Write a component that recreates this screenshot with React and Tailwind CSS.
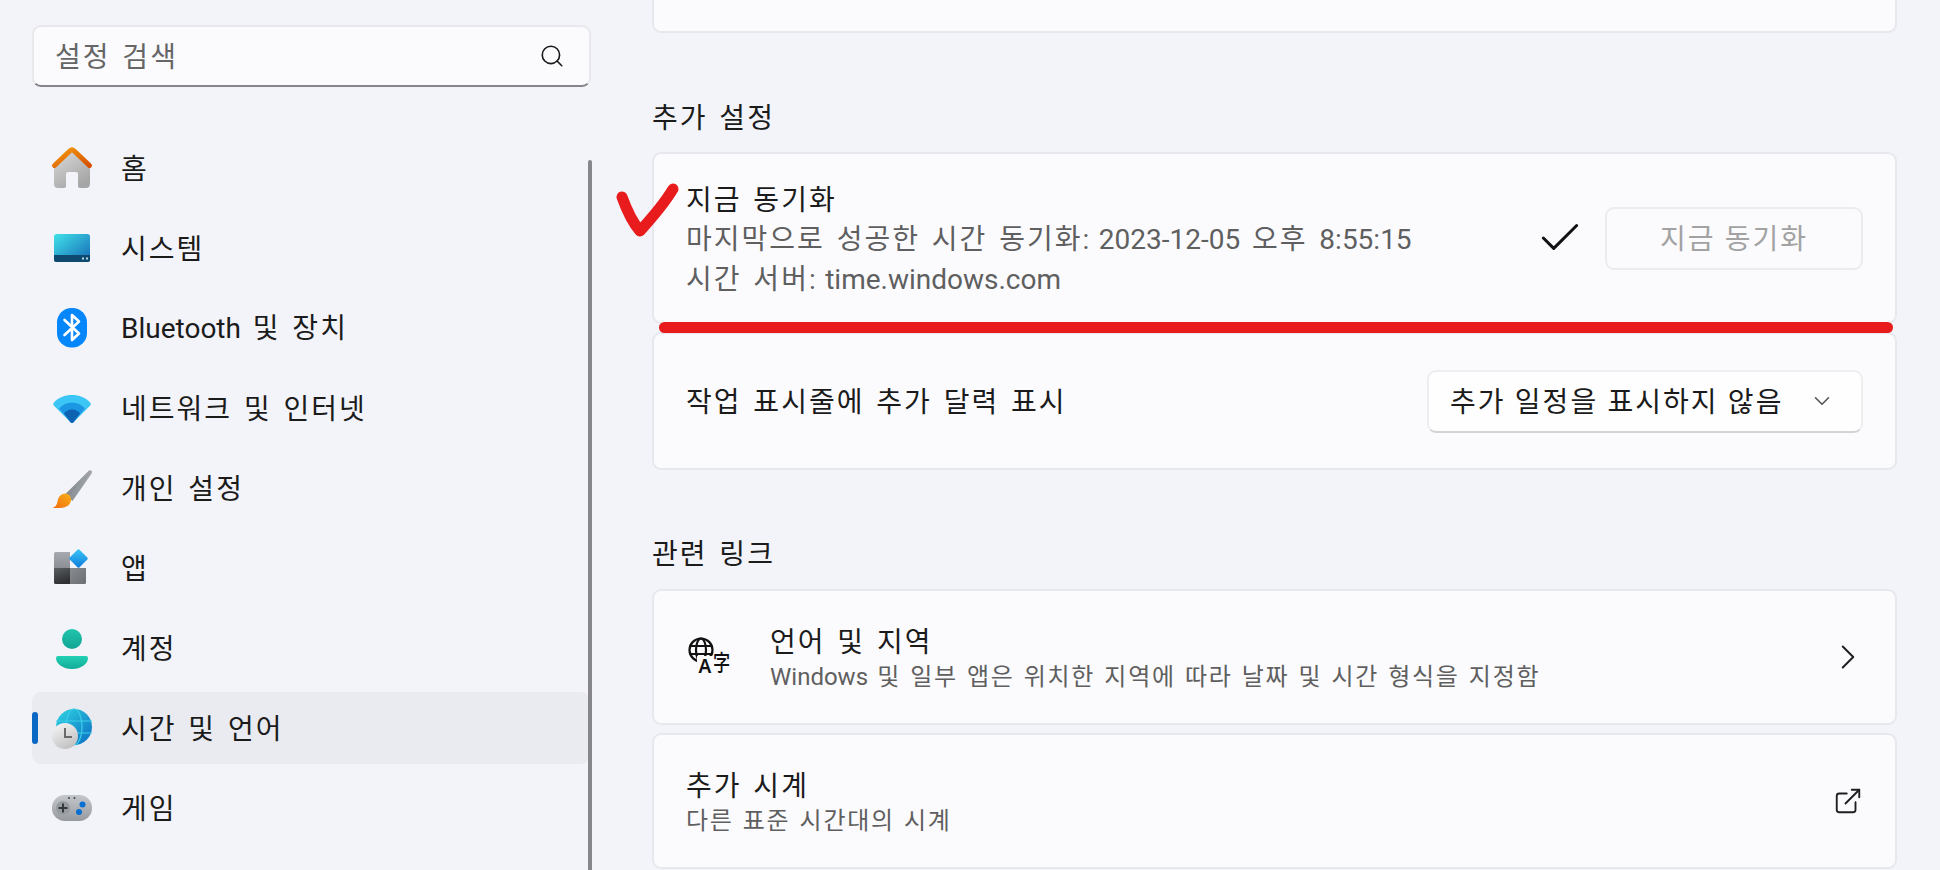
import React from 'react';
import { Search, ChevronDown, ChevronRight, Check, ExternalLink } from 'lucide-react';

const Txt = ({ children }) => (
    <>
        {children.split(/([가-힣 ]+)/).filter(Boolean).map((part, i) => (
            <span key={i} className={/[가-힣]/.test(part) ? 'tracking-[0.072em]' : "font-['Roboto']"}>{part}</span>
        ))}
    </>
);

const HomeIcon = () => (
    <svg width="48" height="48" viewBox="0 0 48 48">
        <defs>
            <linearGradient id="homeBody" x1="0" y1="0" x2="0.6" y2="1"><stop offset="0" stopColor="#dcdcdc" /><stop offset="1" stopColor="#a6a6a6" /></linearGradient>
            <linearGradient id="homeRoof" x1="0" y1="0" x2="1" y2="1"><stop offset="0" stopColor="#f59a0a" /><stop offset="1" stopColor="#d64f00" /></linearGradient>
        </defs>
        <path d="M24 6 L42 22 V40 a4 4 0 0 1-4 4 H32 a2 2 0 0 1-2-2 V30 a2 2 0 0 0-2-2 H20 a2 2 0 0 0-2 2 V42 a2 2 0 0 1-2 2 H10 a4 4 0 0 1-4-4 V22 Z" fill="url(#homeBody)" />
        <path d="M6.5 21.5 L22 6.8 a3 3 0 0 1 4 0 L41.5 21.5" fill="none" stroke="url(#homeRoof)" strokeWidth="5" strokeLinecap="round" strokeLinejoin="round" />
    </svg>
);

const SystemIcon = () => (
    <svg width="48" height="48" viewBox="0 0 48 48">
        <defs>
            <linearGradient id="sysScreen" x1="0" y1="0" x2="1" y2="1"><stop offset="0" stopColor="#40e2ea" /><stop offset="1" stopColor="#1568b4" /></linearGradient>
        </defs>
        <rect x="6" y="10" width="36" height="28" rx="2.5" fill="url(#sysScreen)" />
        <path d="M6 31 H42 V35.5 a2.5 2.5 0 0 1-2.5 2.5 H8.5 a2.5 2.5 0 0 1-2.5-2.5 Z" fill="#0e4a70" />
        <rect x="34" y="33.5" width="2" height="2" fill="#b9d6e4" />
        <rect x="38" y="33.5" width="2" height="2" fill="#b9d6e4" />
    </svg>
);

const BluetoothIcon = () => (
    <svg width="48" height="48" viewBox="0 0 48 48">
        <rect x="9" y="4" width="30" height="39.5" rx="14.5" fill="#0686fb" />
        <path d="M16.5 16 L31 29.5 L24 36 V11 L31 17.5 L16.5 31" fill="none" stroke="#fff" strokeWidth="2.6" strokeLinejoin="round" strokeLinecap="round" />
    </svg>
);

const WifiIcon = () => (
    <svg width="48" height="48" viewBox="0 0 48 48">
        <path d="M6 18.5 C10 13.5 17 11 24 11 C31 11 38 13.5 42 18.5 c1 1.2 1 2.2 0 3.2 L25.5 38.3 c-.9.9-2.1.9-3 0 L6 21.7 c-1-1-1-2 0-3.2 Z" fill="#3cc6f6" />
        <path d="M11 24.5 C14.5 20.5 19 18.5 24 18.5 C29 18.5 33.5 20.5 37 24.5 L25.5 38.3 c-.9.9-2.1.9-3 0 Z" fill="#1a96e2" />
        <path d="M16 29.5 C18 27 21 25.5 24 25.5 C27 25.5 30 27 32 29.5 L25.5 38.3 c-.9.9-2.1.9-3 0 Z" fill="#0f62b2" />
    </svg>
);

const BrushIcon = () => (
    <svg width="48" height="48" viewBox="0 0 48 48">
        <defs>
            <linearGradient id="brushHandle" x1="0" y1="0" x2="1" y2="0.4"><stop offset="0" stopColor="#6f767c" /><stop offset="1" stopColor="#a9adb2" /></linearGradient>
            <linearGradient id="brushHair" x1="1" y1="0" x2="0" y2="1"><stop offset="0" stopColor="#f9b21a" /><stop offset="1" stopColor="#f26a0a" /></linearGradient>
        </defs>
        <path d="M40 7.5 c1.8-2.4 5-.8 3.8 1.8 L24.5 37 L16.5 31 Z" fill="url(#brushHandle)" />
        <path d="M4.5 44 c3-.8 4.5-3.2 5-6.5 c.6-4.2 3.3-8 7.5-8 c4 0 6.5 3 6 7 c-.6 4.6-5 7.5-11 7.5 Z" fill="url(#brushHair)" />
    </svg>
);

const AppsIcon = () => (
    <svg width="48" height="48" viewBox="0 0 48 48">
        <defs>
            <linearGradient id="appsTop" x1="0" y1="0" x2="0" y2="1"><stop offset="0" stopColor="#a7abb1" /><stop offset="1" stopColor="#8b8e94" /></linearGradient>
            <linearGradient id="appsDark" x1="0" y1="0" x2="0.4" y2="1"><stop offset="0" stopColor="#5b5e62" /><stop offset="1" stopColor="#2e3033" /></linearGradient>
            <linearGradient id="appsMid" x1="0" y1="0" x2="1" y2="1"><stop offset="0" stopColor="#888b90" /><stop offset="1" stopColor="#6a6d72" /></linearGradient>
            <linearGradient id="appsBlue" x1="0" y1="0" x2="1" y2="1"><stop offset="0" stopColor="#3cc8f7" /><stop offset="1" stopColor="#0d79da" /></linearGradient>
        </defs>
        <path d="M7.5 8 H22 V24 H6 V9.5 a1.5 1.5 0 0 1 1.5-1.5 Z" fill="url(#appsTop)" />
        <path d="M6 24 H22 V40 H7.5 a1.5 1.5 0 0 1-1.5-1.5 Z" fill="url(#appsDark)" />
        <path d="M22 24 H38 V38.5 a1.5 1.5 0 0 1-1.5 1.5 H22 Z" fill="url(#appsMid)" />
        <rect x="23.5" y="7.5" width="14" height="14" rx="1.5" transform="rotate(45 30.5 14.5)" fill="url(#appsBlue)" />
    </svg>
);

const AccountIcon = () => (
    <svg width="48" height="48" viewBox="0 0 48 48">
        <defs>
            <linearGradient id="userHead" x1="0" y1="0" x2="0" y2="1"><stop offset="0" stopColor="#20c4ac" /><stop offset="1" stopColor="#13a594" /></linearGradient>
            <linearGradient id="userBody" x1="0" y1="0" x2="0" y2="1"><stop offset="0" stopColor="#23d0b4" /><stop offset="1" stopColor="#12ab98" /></linearGradient>
        </defs>
        <ellipse cx="24" cy="15" rx="10" ry="10" fill="url(#userHead)" />
        <path d="M8 34 a2 2 0 0 1 2-2 H38 a2 2 0 0 1 2 2 c0 6-7 11-16 11 s-16-5-16-11 Z" fill="url(#userBody)" />
    </svg>
);

const GlobeIcon = () => (
    <svg width="48" height="48" viewBox="0 0 48 48">
        <defs>
            <linearGradient id="globeFill" x1="0" y1="0" x2="1" y2="1"><stop offset="0" stopColor="#2fd5e2" /><stop offset="1" stopColor="#0a6cc2" /></linearGradient>
            <linearGradient id="clockFill" x1="0.2" y1="0" x2="0.8" y2="1"><stop offset="0" stopColor="#f4f4f4" /><stop offset="1" stopColor="#bdbdbd" /></linearGradient>
        </defs>
        <circle cx="26" cy="23" r="18" fill="url(#globeFill)" />
        <ellipse cx="26" cy="23" rx="8" ry="18" fill="none" stroke="#3ccdea" strokeWidth="1.2" />
        <path d="M8 17 H44 M8 29 H44" stroke="#3ccdea" strokeWidth="1.2" />
        <circle cx="17" cy="32" r="13" fill="url(#clockFill)" />
        <path d="M17 24 V33 H24" fill="none" stroke="#6a6a6a" strokeWidth="2" />
    </svg>
);

const GameIcon = () => (
    <svg width="48" height="48" viewBox="0 0 48 48">
        <defs>
            <linearGradient id="padFill" x1="0" y1="0" x2="0" y2="1"><stop offset="0" stopColor="#c3c7cc" /><stop offset="1" stopColor="#979a9f" /></linearGradient>
        </defs>
        <rect x="4" y="11" width="40" height="26" rx="12.5" fill="url(#padFill)" />
        <circle cx="15" cy="24" r="7" fill="#979ca3" />
        <path d="M15 19.5 V28.5 M10.5 24 H19.5" stroke="#35383b" strokeWidth="2" />
        <circle cx="34.5" cy="20.5" r="3" fill="#0a6fd2" />
        <circle cx="31" cy="28" r="3" fill="#0a6fd2" />
        <circle cx="21" cy="14" r="1" fill="#44474a" />
        <circle cx="26.5" cy="14" r="1" fill="#44474a" />
    </svg>
);

const LanguageIcon = () => (
    <svg width="44" height="42" viewBox="0 0 44 42" className="shrink-0">
        <circle cx="15" cy="14" r="11.5" fill="none" stroke="#111" strokeWidth="2.2" />
        <ellipse cx="15" cy="14" rx="5" ry="11.5" fill="none" stroke="#111" strokeWidth="2.2" />
        <path d="M3.5 10 H26.5 M3.5 18 H26.5" stroke="#111" strokeWidth="2.2" />
        <rect x="11" y="20" width="33" height="22" fill="#fbfbfe" />
        <text x="12.5" y="37" fontSize="19" fontWeight="600" fill="#111" fontFamily="'Noto Sans', sans-serif">A</text>
        <text transform="translate(27 34) scale(0.78 1)" fontSize="22" fontWeight="500" fill="#111" fontFamily="'Noto Sans CJK KR', sans-serif">字</text>
    </svg>
);

const navItems = [
    { label: '홈', icon: <HomeIcon /> },
    { label: '시스템', icon: <SystemIcon /> },
    { label: 'Bluetooth 및 장치', icon: <BluetoothIcon /> },
    { label: '네트워크 및 인터넷', icon: <WifiIcon /> },
    { label: '개인 설정', icon: <BrushIcon /> },
    { label: '앱', icon: <AppsIcon /> },
    { label: '계정', icon: <AccountIcon /> },
    { label: '시간 및 언어', icon: <GlobeIcon />, active: true },
    { label: '게임', icon: <GameIcon /> },
];

const Card = ({ className, children }) => (
    <div className={`flex items-center bg-[#fbfbfe] border-2 border-[#e7e8ed] rounded-[9px] pl-[32px] pr-[32px] ${className}`}>
        {children}
    </div>
);

const App = () => {
    return (
        <div className="relative flex h-[870px] w-[1940px] overflow-hidden bg-[#f3f4f9] text-[28px] leading-[38px] [word-spacing:0.09em] text-[#1b1b1b] font-['Noto_Sans','Noto_Sans_CJK_KR',sans-serif]">
            {/* 왼쪽 메뉴 */}
            <aside className="relative w-[652px] shrink-0 pl-[32px] pt-[25px]">
                <div className="flex items-center justify-between h-[62px] w-[559px] bg-[#fbfbfe] border-2 border-[#e8e8ed] border-b-[#86868a] rounded-[9px] pl-[21px] pr-[24px]">
                    <span className="text-[#666666]"><Txt>설정 검색</Txt></span>
                    <Search size={26} strokeWidth={1.5} className="text-[#1a1a1a]" />
                </div>
                <nav className="mt-[45px] flex flex-col gap-2 w-[558px]">
                    {navItems.map((item) => (
                        <div key={item.label} className={`relative flex items-center h-[72px] pl-[16px] gap-[25px] rounded-[9px] ${item.active ? 'bg-[#eaebf0]' : ''}`}>
                            {item.active && <span className="absolute left-0 top-[20px] h-[32px] w-[6px] rounded-full bg-[#0a67c4]" />}
                            {item.icon}
                            <span><Txt>{item.label}</Txt></span>
                        </div>
                    ))}
                </nav>
                {/* 스크롤 막대 */}
                <div className="absolute left-[588px] top-[160px] bottom-0 w-[4px] rounded-t-full bg-[#87878b]" />
            </aside>

            {/* 오른쪽 설정 */}
            <main className="w-[1245px] shrink-0">
                <div className="h-[33px] bg-[#fbfbfe] border-2 border-t-0 border-[#e7e8ed] rounded-b-[9px]" />

                <h2 className="mt-[64px] mb-[15px] h-[40px] leading-[40px] font-normal"><Txt>추가 설정</Txt></h2>
                <div className="flex flex-col gap-2">
                    <Card className="h-[172px] justify-between">
                        <div className="flex flex-col pt-[3px]">
                            <span className="leading-[39px]"><Txt>지금 동기화</Txt></span>
                            <span className="leading-[39px] text-[#5f5f5f]"><Txt>마지막으로 성공한 시간 동기화: 2023-12-05 오후 8:55:15</Txt></span>
                            <span className="leading-[39px] text-[#5f5f5f]"><Txt>시간 서버: time.windows.com</Txt></span>
                        </div>
                        <div className="flex items-center gap-[20px]">
                            <Check size={50} strokeWidth={1.45} className="text-[#111111]" />
                            <button className="h-[63px] w-[258px] bg-[#fbfbfe] border-2 border-[#ececf0] rounded-[9px] text-[#a2a2a2]"><Txt>지금 동기화</Txt></button>
                        </div>
                    </Card>
                    <Card className="h-[138px] justify-between">
                        <span><Txt>작업 표시줄에 추가 달력 표시</Txt></span>
                        <button className="flex items-center justify-between h-[63px] w-[436px] bg-[#fefefe] border-2 border-[#eeeef1] border-b-[#d3d3d6] rounded-[9px] pl-[21px] pr-[26px]">
                            <span className="tracking-[0.01em]"><Txt>추가 일정을 표시하지 않음</Txt></span>
                            <ChevronDown size={26} strokeWidth={1.5} className="text-[#555555]" />
                        </button>
                    </Card>
                </div>

                <h2 className="mt-[63px] mb-[16px] h-[40px] leading-[40px] font-normal"><Txt>관련 링크</Txt></h2>
                <div className="flex flex-col gap-2">
                    <Card className="h-[136px] justify-between">
                        <div className="flex items-center gap-[40px]">
                            <LanguageIcon />
                            <div className="flex flex-col pt-[2px]">
                                <span className="leading-[36px]"><Txt>언어 및 지역</Txt></span>
                                <span className="text-[24px] leading-[34px] [word-spacing:0.05em] text-[#5f5f5f]"><Txt>Windows 및 일부 앱은 위치한 지역에 따라 날짜 및 시간 형식을 지정함</Txt></span>
                            </div>
                        </div>
                        <ChevronRight size={42} strokeWidth={1.15} className="text-[#1f1f1f] mr-[-6px]" />
                    </Card>
                    <Card className="h-[136px] justify-between">
                        <div className="flex flex-col pt-[2px]">
                            <span className="leading-[36px]"><Txt>추가 시계</Txt></span>
                            <span className="text-[24px] leading-[34px] [word-spacing:0.05em] text-[#5f5f5f]"><Txt>다른 표준 시간대의 시계</Txt></span>
                        </div>
                        <ExternalLink size={30} strokeWidth={1.5} className="text-[#1f1f1f]" />
                    </Card>
                </div>
            </main>

            {/* 빨간 표시 */}
            <div className="absolute left-[659px] top-[322px] h-[11px] w-[1234px] rounded-full bg-[#e81c1c]" />
            <svg className="absolute left-[610px] top-[178px]" width="74" height="64" viewBox="0 0 74 64">
                <path d="M12 19 C16 30 22 44 30 53 C40 42 54 26 63 11" fill="none" stroke="#e81c1c" strokeWidth="11" strokeLinecap="round" strokeLinejoin="round" />
            </svg>
        </div>
    );
};

export default App;
